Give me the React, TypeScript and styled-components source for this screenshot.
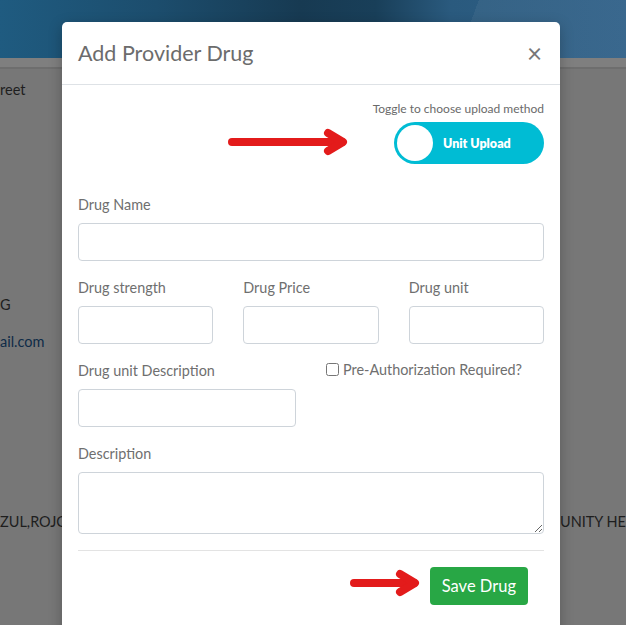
import React from 'react';
import styled, { createGlobalStyle } from 'styled-components';

const GlobalStyle = createGlobalStyle`
  html, body {
    margin: 0;
    padding: 0;
    height: 625px;
    overflow: hidden;
    background: #777777;
    font-family: 'Segoe UI', Lato, 'Noto Sans', sans-serif;
  }
  #root {
    height: 625px;
  }
  * {
    box-sizing: border-box;
  }
`;

const App = () => {
  return (
    <>
      <GlobalStyle />
      <Page>
        <HeaderBand />
        <SubBar />
        <BackgroundContent>
          <BgRow $top={11}>
            <BgText>reet</BgText>
          </BgRow>
          <BgRow $top={195}>
            <BgText>G</BgText>
          </BgRow>
          <BgRow $top={17}>
            <BgText $link>ail.com</BgText>
          </BgRow>
          <BgRow $top={160}>
            <BgText>ZUL,ROJO,</BgText>
            <BgText>MUNITY HE</BgText>
          </BgRow>
        </BackgroundContent>

        <Modal>
          <ModalHeader>
            <ModalTitle>Add Provider Drug</ModalTitle>
            <CloseButton>×</CloseButton>
          </ModalHeader>
          <ModalBody>
            <ToggleArea>
              <ToggleCaption>Toggle to choose upload method</ToggleCaption>
              <Toggle>
                <Knob />
                <ToggleText>Unit Upload</ToggleText>
              </Toggle>
            </ToggleArea>

            <FormGroup>
              <Label>Drug Name</Label>
              <Input />
            </FormGroup>

            <Row $cols={3}>
              <FormGroup>
                <Label>Drug strength</Label>
                <Input />
              </FormGroup>
              <FormGroup>
                <Label>Drug Price</Label>
                <Input />
              </FormGroup>
              <FormGroup>
                <Label>Drug unit</Label>
                <Input />
              </FormGroup>
            </Row>

            <Row $cols={2}>
              <FormGroup>
                <Label>Drug unit Description</Label>
                <Input />
              </FormGroup>
              <CheckLabel>
                <CheckBox type="checkbox" />
                Pre-Authorization Required?
              </CheckLabel>
            </Row>

            <FormGroup>
              <Label>Description</Label>
              <TextArea rows={2} />
            </FormGroup>

            <Divider />

            <Actions>
              <SaveButton>Save Drug</SaveButton>
            </Actions>
          </ModalBody>
        </Modal>

        <Arrow style={{ left: 228, top: 128 }} width={120} height={28} />
        <Arrow style={{ left: 350, top: 569 }} width={70} height={28} />
      </Page>
    </>
  );
};

const Arrow = ({ width, height, style }: { width: number; height: number; style: React.CSSProperties }) => (
  <ArrowSvg width={width} height={height} viewBox={`0 0 ${width} ${height}`} style={style}>
    <path
      d={`M4 ${height / 2} H${width - 6}`}
      stroke="#e31b1b"
      strokeWidth="8"
      strokeLinecap="round"
      fill="none"
    />
    <path
      d={`M${width - 20} 5 L${width - 5} ${height / 2} L${width - 20} ${height - 5}`}
      stroke="#e31b1b"
      strokeWidth="8"
      strokeLinecap="round"
      strokeLinejoin="round"
      fill="none"
    />
  </ArrowSvg>
);

// Styled Components
const Page = styled.div`
  position: relative;
  height: 625px;
  overflow: hidden;
`;

const HeaderBand = styled.div`
  height: 58px;
  background:
    linear-gradient(110deg, transparent 0 74%, rgba(255, 255, 255, 0.05) 74% 100%),
    linear-gradient(90deg, #1f5b80 0%, #1c4d6d 25%, #173a52 48%, #193f59 60%, #2a5a7e 72%, #2f6088 100%);
`;

const SubBar = styled.div`
  height: 11px;
  background: #7f7f7f;
  border-bottom: 2px solid #6e6e6e;
`;

const BackgroundContent = styled.div`
  display: flex;
  flex-direction: column;
`;

const BgRow = styled.div<{ $top: number }>`
  display: flex;
  justify-content: space-between;
  margin-top: ${(p) => p.$top}px;
`;

const BgText = styled.span<{ $link?: boolean }>`
  font-size: 14.5px;
  line-height: 20px;
  color: ${(p) => (p.$link ? '#0e2b47' : '#1e1e1e')};
  white-space: nowrap;
`;

const Modal = styled.div`
  position: absolute;
  top: 22px;
  left: 62px;
  width: 498px;
  height: 640px;
  background: #ffffff;
  border-radius: 5px;
  box-shadow: 0 4px 14px rgba(0, 0, 0, 0.25);
`;

const ModalHeader = styled.div`
  display: flex;
  align-items: center;
  justify-content: space-between;
  padding: 16px;
  border-bottom: 1px solid #dee2e6;
`;

const ModalTitle = styled.h5`
  margin: 0;
  font-size: 21.5px;
  line-height: 30px;
  font-weight: 400;
  color: #6c6c6c;
`;

const CloseButton = styled.span`
  font-size: 26px;
  line-height: 30px;
  font-weight: 400;
  color: #777777;
  margin-right: 2px;
`;

const ModalBody = styled.div`
  padding: 16px;
`;

const ToggleArea = styled.div`
  display: flex;
  flex-direction: column;
  align-items: flex-end;
  margin-bottom: 30px;
`;

const ToggleCaption = styled.div`
  font-size: 12px;
  line-height: 16px;
  color: #6a6a6a;
`;

const Toggle = styled.div`
  margin-top: 5px;
  width: 150px;
  height: 42px;
  border-radius: 21px;
  background: #00bcd4;
  display: flex;
  align-items: center;
  padding-left: 3px;
`;

const Knob = styled.div`
  width: 36px;
  height: 36px;
  border-radius: 50%;
  background: #ffffff;
`;

const ToggleText = styled.span`
  margin-left: 10px;
  font-size: 12.5px;
  font-weight: 800;
  color: #ffffff;
`;

const Row = styled.div<{ $cols: number }>`
  display: grid;
  grid-template-columns: repeat(${(p) => p.$cols}, 1fr);
  column-gap: 30px;
`;

const FormGroup = styled.div`
  display: flex;
  flex-direction: column;
  margin-bottom: 16px;
`;

const Label = styled.label`
  font-size: 14.4px;
  line-height: 21px;
  color: #6f6f6f;
  margin-bottom: 8px;
`;

const Input = styled.input`
  height: 38px;
  width: 100%;
  border: 1px solid #ced4da;
  border-radius: 4px;
  background: #fff;
  padding: 6px 12px;
  font-size: 14px;
`;

const TextArea = styled.textarea`
  height: 62px;
  width: 100%;
  border: 1px solid #ced4da;
  border-radius: 4px;
  padding: 6px 12px;
  font-family: inherit;
  font-size: 14px;
  resize: vertical;
`;

const CheckLabel = styled.label`
  display: flex;
  align-items: center;
  align-self: start;
  gap: 4px;
  font-size: 14.4px;
  line-height: 21px;
  color: #6f6f6f;
  margin-top: -1px;
`;

const CheckBox = styled.input`
  width: 13px;
  height: 13px;
  margin: 0;
`;

const Divider = styled.hr`
  margin: 0 0 16px;
  border: 0;
  border-top: 1px solid #e3e3e3;
`;

const Actions = styled.div`
  display: flex;
  justify-content: flex-end;
  padding-right: 16px;
`;

const SaveButton = styled.button`
  height: 38px;
  padding: 0 12px;
  border: none;
  border-radius: 4px;
  background: #28a745;
  color: #ffffff;
  font-family: inherit;
  font-size: 16.5px;
`;

const ArrowSvg = styled.svg`
  position: absolute;
`;

// Export App
export default App;
